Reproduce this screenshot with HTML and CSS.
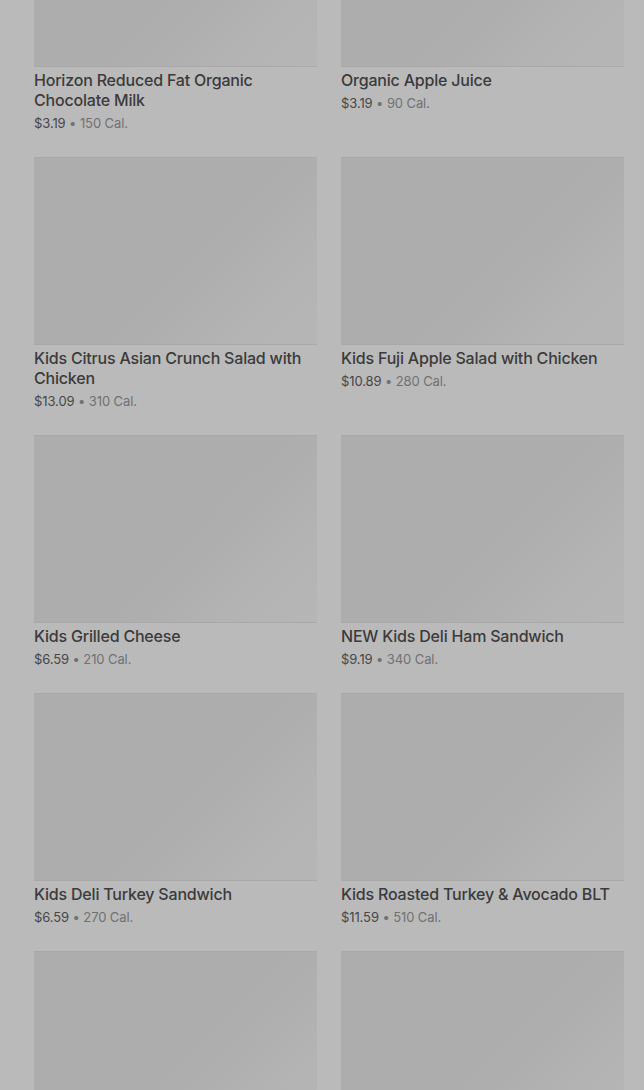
FILE: index.html
```html
<!DOCTYPE html>
<html lang="en">
<head>
  <meta charset="UTF-8">
  <title>Kids Menu</title>
  <link rel="stylesheet" href="styles.css">
</head>
<body>
  <div class="menuGrid">
    <div class="item">
      <div class="photo"></div>
      <h3>Horizon Reduced Fat Organic Chocolate Milk</h3>
      <p class="info"><span class="price">$3.19</span> • 150 Cal.</p>
    </div>
    <div class="item">
      <div class="photo"></div>
      <h3>Organic Apple Juice</h3>
      <p class="info"><span class="price">$3.19</span> • 90 Cal.</p>
    </div>
    <div class="item">
      <div class="photo"></div>
      <h3>Kids Citrus Asian Crunch Salad with Chicken</h3>
      <p class="info"><span class="price">$13.09</span> • 310 Cal.</p>
    </div>
    <div class="item">
      <div class="photo"></div>
      <h3>Kids Fuji Apple Salad with Chicken</h3>
      <p class="info"><span class="price">$10.89</span> • 280 Cal.</p>
    </div>
    <div class="item">
      <div class="photo"></div>
      <h3>Kids Grilled Cheese</h3>
      <p class="info"><span class="price">$6.59</span> • 210 Cal.</p>
    </div>
    <div class="item">
      <div class="photo"></div>
      <h3>NEW Kids Deli Ham Sandwich</h3>
      <p class="info"><span class="price">$9.19</span> • 340 Cal.</p>
    </div>
    <div class="item">
      <div class="photo"></div>
      <h3>Kids Deli Turkey Sandwich</h3>
      <p class="info"><span class="price">$6.59</span> • 270 Cal.</p>
    </div>
    <div class="item">
      <div class="photo"></div>
      <h3>Kids Roasted Turkey &amp; Avocado BLT</h3>
      <p class="info"><span class="price">$11.59</span> • 510 Cal.</p>
    </div>
    <div class="item">
      <div class="photo"></div>
    </div>
    <div class="item">
      <div class="photo"></div>
    </div>
  </div>
</body>
</html>
```

FILE: styles.css
```css
body {
  margin: 0;
  padding: 0;
  background-color: #bababa;
  font-family: Inter, 'Noto Sans', sans-serif;
  overflow: hidden;
  height: 1090px;
}

.menuGrid {
  display: grid;
  grid-template-columns: 1fr 1fr;
  column-gap: 24px;
  row-gap: 25px;
  padding: 0 20px 0 34px;
  margin-top: -121px;
}

.photo {
  height: 188px;
  background: linear-gradient(135deg, #adadad 0%, #adadad 55%, #b3b3b3 80%, #b6b6b6 100%);
  border-top: 1px solid #a9a9a9;
  border-bottom: 1px solid #a9a9a9;
  box-sizing: border-box;
}

.item h3 {
  margin: 3px 0 0;
  font-size: 16px;
  line-height: 20px;
  font-weight: 500;
  color: #3b3b3b;
  letter-spacing: -0.2px;
}

.info {
  margin: 4px 0 0;
  font-size: 13px;
  line-height: 18px;
  color: #717171;
  letter-spacing: -0.1px;
}

.price { color: #474747; }
```
